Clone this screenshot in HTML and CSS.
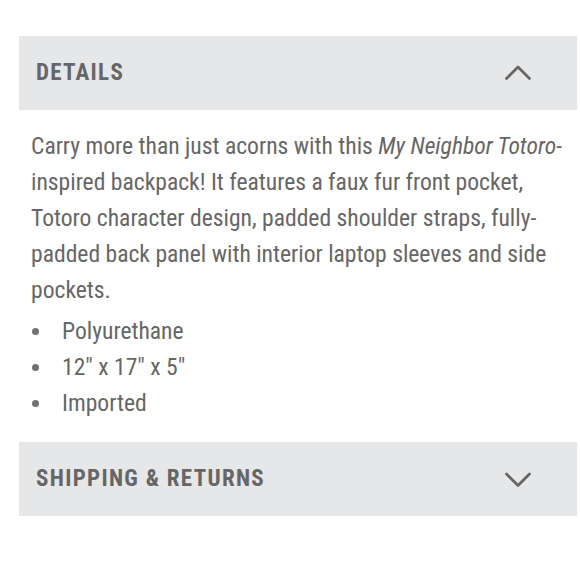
FILE: index.html
```html
<!DOCTYPE html>
<html lang="en">
<head>
<meta charset="utf-8">
<title>Details</title>
<link rel="stylesheet" href="styles.css">
</head>
<body>
<div class="accordion">
  <section class="acc-item">
    <div class="acc-head">
      <span class="acc-title">DETAILS</span>
      <svg class="chev" width="26" height="16" viewBox="0 0 26 16" aria-hidden="true"><polyline points="1.5,13.5 13,2 24.5,13.5"/></svg>
    </div>
    <div class="acc-body">
      <p class="desc">Carry more than just acorns with this <em>My Neighbor Totoro</em>-inspired backpack! It features a faux fur front pocket, Totoro character design, padded shoulder straps, fully-padded back panel with interior laptop sleeves and side pockets.</p>
      <ul class="specs">
        <li>Polyurethane</li>
        <li>12" x 17" x 5"</li>
        <li>Imported</li>
      </ul>
    </div>
  </section>
  <section class="acc-item">
    <div class="acc-head">
      <span class="acc-title">SHIPPING &amp; RETURNS</span>
      <svg class="chev" width="26" height="16" viewBox="0 0 26 16" aria-hidden="true"><polyline points="1.5,3 13,14.5 24.5,3"/></svg>
    </div>
  </section>
</div>
</body>
</html>
```

FILE: styles.css
```css
html, body {
  margin: 0;
  padding: 0;
  background: #ffffff;
}
body {
  font-family: "Roboto Condensed", "Liberation Sans Narrow", "DejaVu Sans Condensed", Roboto, sans-serif;
  color: #666666;
}
.accordion {
  margin: 36px 3px 0 19px;
}
.acc-head {
  height: 74px;
  background: #e6e7e8;
  display: flex;
  align-items: center;
  justify-content: space-between;
  padding: 0 46px 0 17px;
}
.acc-title {
  font-size: 23px;
  font-weight: 700;
  letter-spacing: 1.3px;
  color: #666666;
  position: relative;
  top: -1px;
}
.chev {
  display: block;
  fill: none;
  stroke: #666666;
  stroke-width: 2.8;
  stroke-linecap: round;
  stroke-linejoin: round;
}
.acc-body {
  padding: 18px 0 21px 12px;
}
.desc {
  margin: 0;
  font-size: 23.6px;
  line-height: 36px;
}
.desc em {
  font-style: italic;
}
.specs {
  margin: 5px 0 0 0;
  padding: 0;
  list-style: none;
  font-size: 23.6px;
  line-height: 36px;
}
.specs li {
  display: flex;
  align-items: center;
}
.specs li::before {
  content: "";
  width: 7px;
  height: 7px;
  border-radius: 50%;
  background: #707070;
  margin: 0 23px 0 1px;
  flex: none;
}
```
